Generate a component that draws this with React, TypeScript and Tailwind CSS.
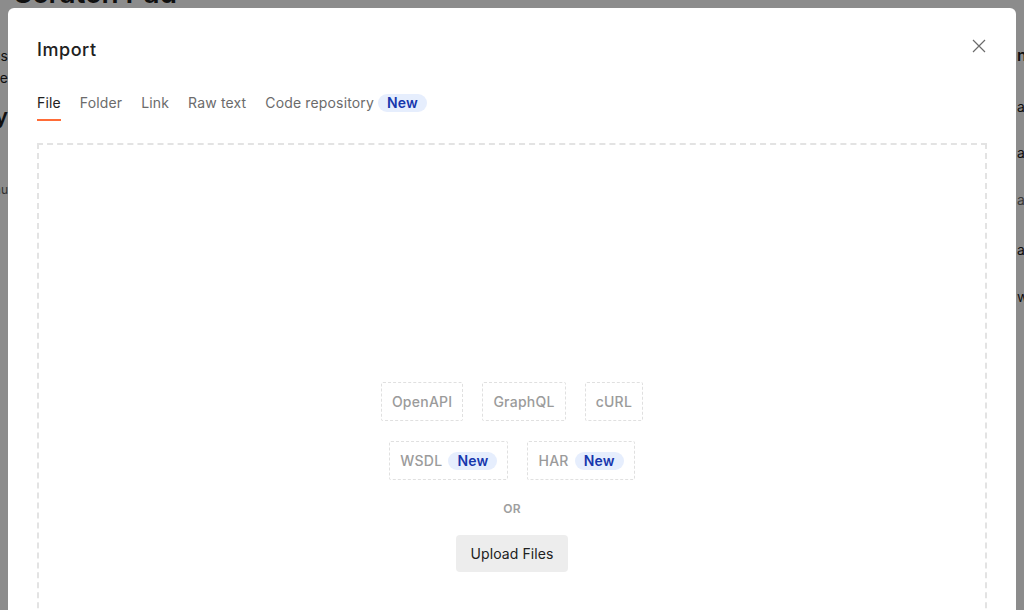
import React, { useState } from 'react';

const tabs = ['File', 'Folder', 'Link', 'Raw text', 'Code repository'];

const NewBadge: React.FC<{ className?: string }> = ({ className = '' }) => (
  <span
    className={`inline-flex items-center rounded-full bg-[#e6eefd] px-[9px] h-[18px] text-[14px] font-semibold leading-none tracking-[0.2px] text-[#1737ad] ${className}`}
  >
    New
  </span>
);

const FormatChip: React.FC<{ label: string; isNew?: boolean }> = ({ label, isNew }) => (
  <div className="flex items-center gap-[6px] h-[39px] px-[10px] border border-dashed border-[#e0e0e0] rounded-[2px] text-[14px] font-medium tracking-[0.25px] text-[#9b9b9b]">
    <span>{label}</span>
    {isNew && <NewBadge />}
  </div>
);

// the page under the overlay, only its edges show
const BackgroundPage: React.FC = () => (
  <div className="flex h-full text-[#1c1c1c]">
    <div className="w-[8px] flex flex-col items-end overflow-hidden shrink-0">
      <div className="h-[46px]" />
      <div className="flex justify-end w-full whitespace-nowrap text-[14px] leading-[20px]">Scratch Pad is</div>
      <div className="flex justify-end w-full whitespace-nowrap text-[14px] leading-[20px] mt-[2px]">offline mode</div>
      <div className="flex justify-end w-full whitespace-nowrap text-[22px] font-semibold leading-[28px] mt-[14px]">Activity</div>
      <div className="flex justify-end w-full whitespace-nowrap text-[12px] leading-[16px] mt-[52px] text-[#5a5a5a]">menu</div>
    </div>
    <div className="flex-1 px-[6px]">
      <div className="text-[28px] font-semibold leading-[34px] mt-[-24px] whitespace-nowrap">Scratch Pad</div>
    </div>
    <div className="w-[8px] overflow-hidden shrink-0 pl-[1px]">
      <div className="h-[44px]" />
      <div className="whitespace-nowrap text-[16px] font-semibold leading-[22px]">nav</div>
      <div className="whitespace-nowrap text-[14px] leading-[20px] mt-[31px]">api</div>
      <div className="whitespace-nowrap text-[14px] leading-[20px] mt-[26px]">api</div>
      <div className="whitespace-nowrap text-[14px] leading-[20px] mt-[27px] text-[#6a6a6a]">api</div>
      <div className="whitespace-nowrap text-[14px] leading-[20px] mt-[30px]">api</div>
      <div className="whitespace-nowrap text-[14px] leading-[20px] mt-[27px]">w</div>
    </div>
  </div>
);

export default function App() {
  const [active, setActive] = useState('File');

  return (
    <div className="relative h-[610px] w-[1024px] overflow-hidden bg-white font-['Inter',sans-serif]">
      <BackgroundPage />

      <div className="absolute inset-0 bg-black/45 pt-2 px-2">
        <div className="bg-white rounded-[6px] h-[820px] px-[29px] pt-[30px] flex flex-col">
          <header className="flex items-start justify-between h-[24px]">
            <h2 className="text-[18px] font-medium text-[#212121] leading-[24px] tracking-[0.55px]">Import</h2>
            <button type="button" aria-label="Close" className="mr-[1px] mt-[1px] text-[#6b6b6b]">
              <svg width="14" height="14" viewBox="0 0 14 14" fill="none" stroke="currentColor" strokeWidth={1.2}>
                <path d="M1 1L13 13M13 1L1 13" />
              </svg>
            </button>
          </header>

          <nav className="flex items-end gap-[19px] mt-[31px]">
            {tabs.map((t) => (
              <button
                key={t}
                type="button"
                onClick={() => setActive(t)}
                className={`flex items-center gap-[4px] pb-[6px] border-b-2 text-[14px] leading-[20px] tracking-[0.15px] ${
                  active === t ? 'border-[#ff6c37] text-[#212121]' : 'border-transparent text-[#6b6b6b]'
                }`}
              >
                {t}
                {t === 'Code repository' && <NewBadge />}
              </button>
            ))}
          </nav>

          <div className="mt-[22px] flex-1 border-2 border-dashed border-[#e3e3e3] flex flex-col items-center pt-[237px]">
            <div className="flex gap-[19px]">
              <FormatChip label="OpenAPI" />
              <FormatChip label="GraphQL" />
              <FormatChip label="cURL" />
            </div>
            <div className="flex gap-[19px] mt-[20px]">
              <FormatChip label="WSDL" isNew />
              <FormatChip label="HAR" isNew />
            </div>
            <div className="mt-[21px] text-[12px] font-semibold text-[#9e9e9e] leading-[16px] tracking-[0.3px]">OR</div>
            <button
              type="button"
              className="mt-[18px] h-[37px] px-[14px] rounded-[4px] bg-[#ededed] text-[14px] tracking-[0.1px] text-[#212121]"
            >
              Upload Files
            </button>
          </div>
        </div>
      </div>
    </div>
  );
}
